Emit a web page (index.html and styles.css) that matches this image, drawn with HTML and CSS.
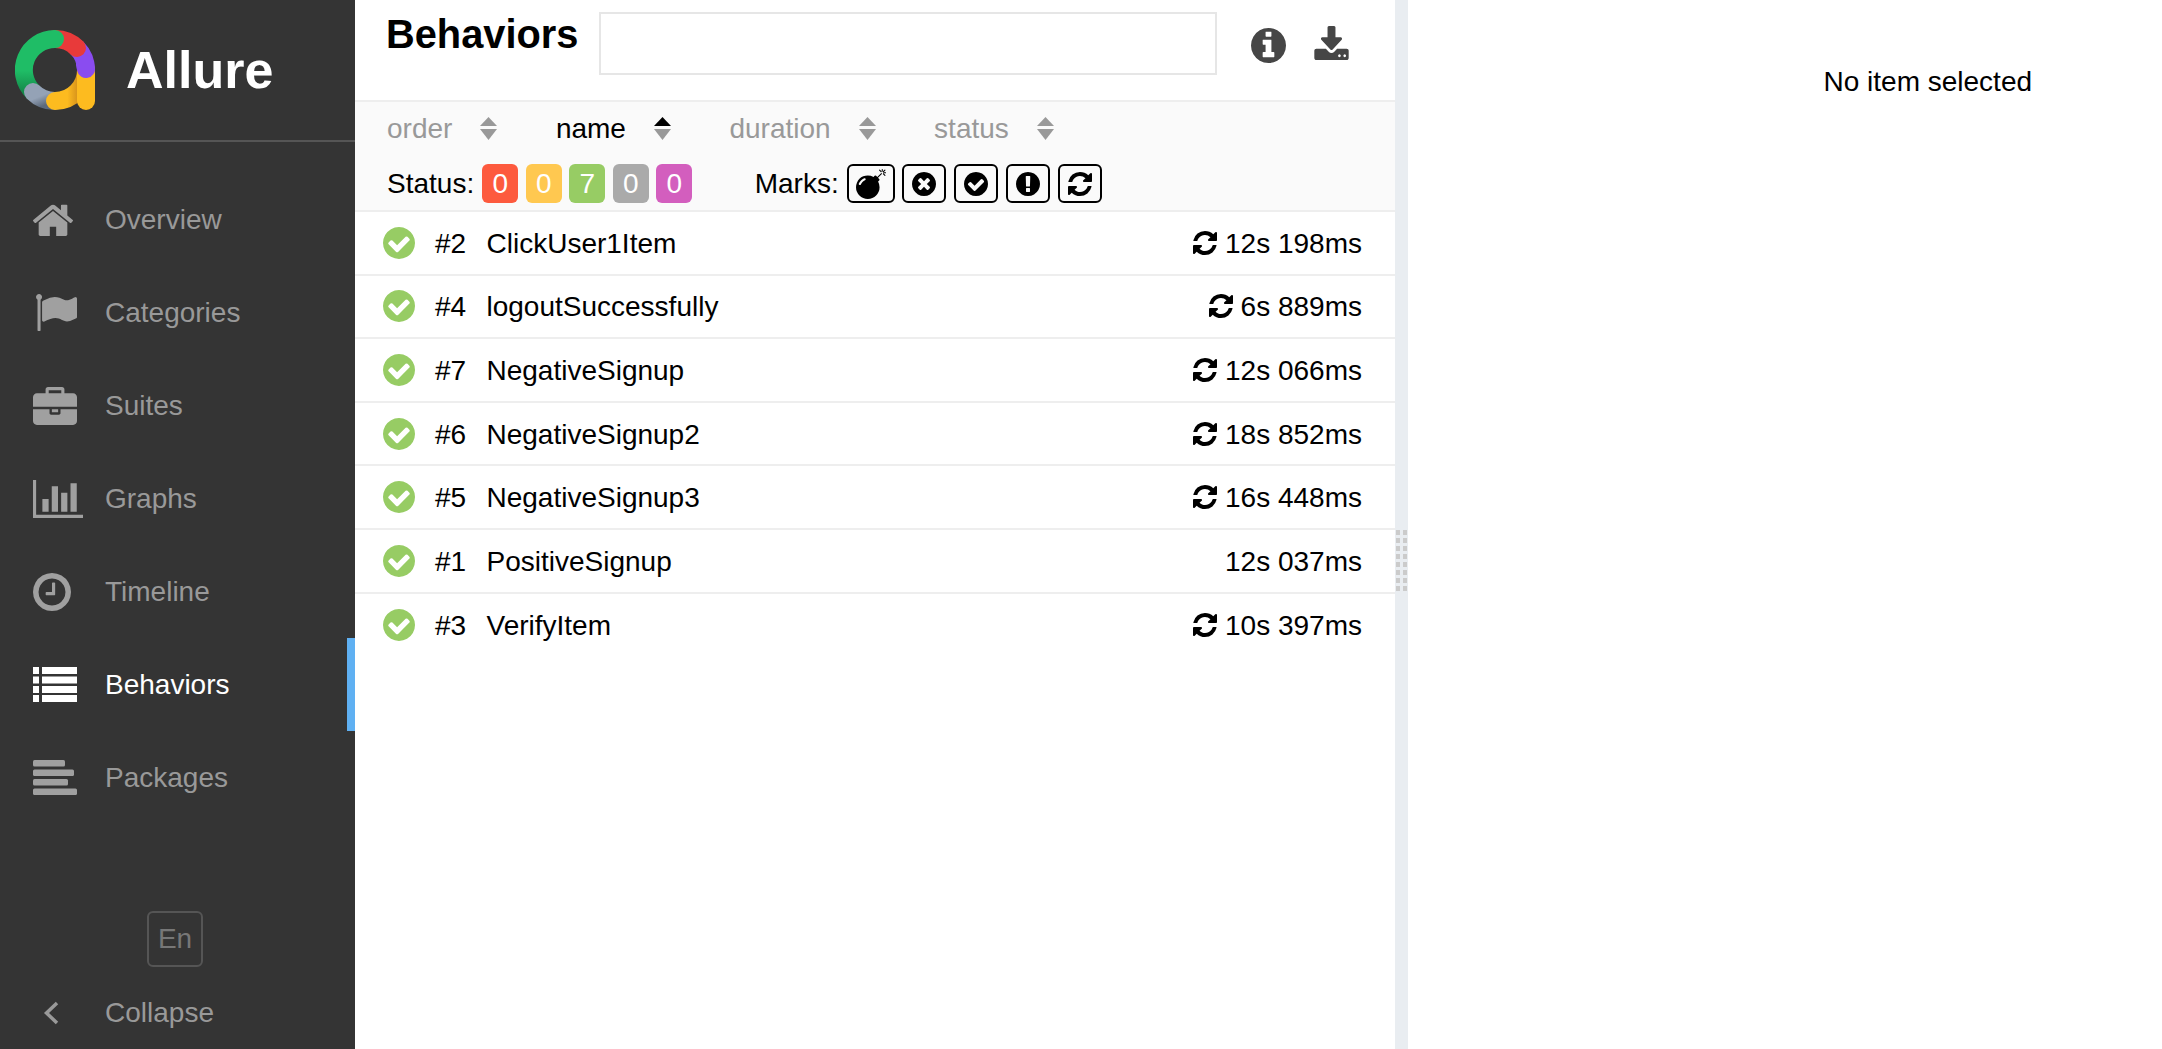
FILE: index.html
```html
<!DOCTYPE html>
<html lang="en">
<head>
    <meta charset="UTF-8">
    <meta name="viewport" content="width=device-width, initial-scale=1.0">
    <title>Allure Report</title>
    <link rel="stylesheet" href="styles.css">
</head>
<body>
    <!-- Side menu -->
    <aside class="side-nav">
        <div class="brand">
            <svg class="brand-logo" viewBox="15 30 80 80" width="80" height="80">
                <defs>
                    <linearGradient id="greenFade" x1="0" y1="0" x2="0" y2="1">
                        <stop offset="0.6" stop-color="#1fbd66"/>
                        <stop offset="1" stop-color="#14894a"/>
                    </linearGradient>
                    <linearGradient id="grayFade" x1="0" y1="0" x2="1" y2="1">
                        <stop offset="0.4" stop-color="#94a2b6"/>
                        <stop offset="1" stop-color="#5d6a7c"/>
                    </linearGradient>
                    <linearGradient id="yellowFade" x1="0" y1="0" x2="1" y2="0">
                        <stop offset="0.4" stop-color="#fdbb1f"/>
                        <stop offset="0.72" stop-color="#d8941c"/>
                    </linearGradient>
                </defs>
                <g fill="none" stroke-width="18" stroke-linecap="round">
                    <path stroke="#8a4cf0" d="M77 48A31 31 0 0 1 86 70"/>
                    <path stroke="#e83a3a" d="M55 39A31 31 0 0 1 77 48"/>
                    <path stroke="url(#greenFade)" d="M33 92A31 31 0 0 1 55 39"/>
                    <path stroke="url(#grayFade)" d="M33 92A31 31 0 0 0 55 101"/>
                    <path stroke="url(#yellowFade)" d="M55 101A31 31 0 0 0 86 70"/>
                    <path stroke="#fdbb1f" d="M86 74V101"/>
                    <path stroke="#8a4cf0" d="M85 64L86 69"/>
                </g>
            </svg>
            <span class="brand-name">Allure</span>
        </div>
        <ul class="menu">
            <li class="menu-item">
                <span class="menu-icon">
                    <svg viewBox="92 224 1608 1312" width="40" height="32" preserveAspectRatio="none"><path d="M1472 992v480q0 26-19 45t-45 19h-384v-384h-256v384h-384q-26 0-45-19t-19-45v-480q0-1 .5-3t.5-3l575-474 575 474q1 2 1 6zm223-69l-62 74q-8 9-21 11h-3q-13 0-21-7l-692-577-692 577q-12 8-24 7-13-2-21-11l-62-74q-8-10-7-23.500t11-21.500l719-599q32-26 76-26t76 26l244 204v-195q0-14 9-23t23-9h192q14 0 23 9t9 23v408l219 182q10 8 11 21.500t-7 23.500z"/></svg>
                </span>
                Overview
            </li>
            <li class="menu-item">
                <span class="menu-icon">
                    <svg class="icon-flag" viewBox="64 128 1728 1536" width="41" height="37" preserveAspectRatio="none"><path d="M320 256q0 72-64 110v1266q0 13-9.500 22.500t-22.500 9.500h-64q-13 0-22.500-9.500t-9.500-22.500v-1266q-64-38-64-110 0-53 37.500-90.500t90.500-37.500 90.500 37.500 37.500 90.500zm1472 64v763q0 25-12.500 38.500t-39.500 27.500q-215 116-369 116-61 0-123.500-22t-108.500-48-115.500-48-142.500-22q-192 0-464 146-17 9-33 9-26 0-45-19t-19-45v-742q0-32 31-55 21-14 79-43 236-120 421-120 107 0 200 29t219 88q38 19 88 19 54 0 117.500-21t110-47 88-47 54.500-21q26 0 45 19t19 45z"/></svg>
                </span>
                Categories
            </li>
            <li class="menu-item">
                <span class="menu-icon">
                    <svg viewBox="0 0 1792 1536" width="44" height="38" preserveAspectRatio="none"><path d="M640 256h512v-128h-512v128zm1152 640v480q0 66-47 113t-113 47h-1472q-66 0-113-47t-47-113v-480h672v160q0 26 19 45t45 19h320q26 0 45-19t19-45v-160h672zm-768 0v128h-256v-128h256zm768-480v384h-1792v-384q0-66 47-113t113-47h352v-160q0-40 28-68t68-28h576q40 0 68 28t28 68v160h352q66 0 113 47t47 113z"/></svg>
                </span>
                Suites
            </li>
            <li class="menu-item">
                <span class="menu-icon">
                    <svg viewBox="0 128 2048 1536" width="50" height="38" preserveAspectRatio="none"><path d="M640 896v512h-256v-512h256zm384-512v1024h-256v-1024h256zm1024 1152v128h-2048v-1536h128v1408h1920zm-640-896v768h-256v-768h256zm384-384v1152h-256v-1152h256z"/></svg>
                </span>
                Graphs
            </li>
            <li class="menu-item">
                <span class="menu-icon">
                    <svg viewBox="128 128 1536 1536" width="38" height="38"><path d="M1024 544v448q0 14-9 23t-23 9h-320q-14 0-23-9t-9-23v-64q0-14 9-23t23-9h224v-352q0-14 9-23t23-9h64q14 0 23 9t9 23zm416 352q0-148-73-273t-198-198-273-73-273 73-198 198-73 273 73 273 198 198 273 73 273-73 198-198 73-273zm224 0q0 209-103 385.500t-279.500 279.500-385.500 103-385.500-103-279.500-279.500-103-385.500 103-385.500 279.500-279.500 385.500-103 385.500 103 279.500 279.500 103 385.500z"/></svg>
                </span>
                Timeline
            </li>
            <li class="menu-item menu-item-active">
                <span class="menu-icon">
                    <svg viewBox="0 0 44 35" width="44" height="35">
                        <rect x="0" y="0" width="6" height="7"/><rect x="9" y="0" width="35" height="7"/>
                        <rect x="0" y="9.500" width="6" height="7"/><rect x="9" y="9.500" width="35" height="7"/>
                        <rect x="0" y="19" width="6" height="7"/><rect x="9" y="19" width="35" height="7"/>
                        <rect x="0" y="28" width="6" height="7"/><rect x="9" y="28" width="35" height="7"/>
                    </svg>
                </span>
                Behaviors
            </li>
            <li class="menu-item">
                <span class="menu-icon">
                    <svg viewBox="0 0 44 35" width="44" height="35">
                        <rect x="0" y="0" width="32" height="6.500" rx="1.500"/>
                        <rect x="0" y="9.500" width="41" height="6.500" rx="1.500"/>
                        <rect x="0" y="19" width="35" height="6.500" rx="1.500"/>
                        <rect x="0" y="28.500" width="44" height="6.500" rx="1.500"/>
                    </svg>
                </span>
                Packages
            </li>
        </ul>
        <div class="side-footer">
            <div class="lang-wrap"><span class="lang-btn">En</span></div>
            <div class="collapse-row">
                <span class="menu-icon">
                    <svg class="icon-chevron" viewBox="0 0 16 24" width="16" height="24"><path d="M14 2L3.500 12 14 22" fill="none" stroke="#999" stroke-width="3.500"/></svg>
                </span>
                Collapse
            </div>
        </div>
    </aside>

    <!-- Tree pane -->
    <main class="tree-pane">
        <header class="tree-head">
            <h1 class="tree-title">Behaviors</h1>
            <input class="tree-search" type="text">
            <svg class="icon-info" viewBox="128 128 1536 1536" width="35" height="35"><path d="M1152 1376v-160q0-14-9-23t-23-9h-96v-512q0-14-9-23t-23-9h-320q-14 0-23 9t-9 23v160q0 14 9 23t23 9h96v320h-96q-14 0-23 9t-9 23v160q0 14 9 23t23 9h448q14 0 23-9t9-23zm-128-896v-160q0-14-9-23t-23-9h-192q-14 0-23 9t-9 23v160q0 14 9 23t23 9h192q14 0 23-9t9-23zm640 416q0 209-103 385.500t-279.500 279.500-385.500 103-385.500-103-279.500-279.500-103-385.500 103-385.500 279.500-279.500 385.500-103 385.500 103 279.500 279.500 103 385.500z"/></svg>
            <svg class="icon-download" viewBox="0 0 1792 1536" width="37" height="34" preserveAspectRatio="none"><path d="M1344 1344q0-26-19-45t-45-19-45 19-19 45 19 45 45 19 45-19 19-45zm256 0q0-26-19-45t-45-19-45 19-19 45 19 45 45 19 45-19 19-45zm128-224v320q0 40-28 68t-68 28h-1472q-40 0-68-28t-28-68v-320q0-40 28-68t68-28h465l135 136q58 56 136 56t136-56l136-136h464q40 0 68 28t28 68zm-325-569q17 41-14 70l-448 448q-18 19-45 19t-45-19l-448-448q-31-29-14-70 17-39 59-39h256v-448q0-26 19-45t45-19h256q26 0 45 19t19 45v448h256q42 0 59 39z"/></svg>
        </header>

        <div class="filters">
            <div class="sort-row">
                <span class="sort-item">order
                    <svg class="sort-arrows" viewBox="0 0 17 23" width="17" height="23"><path d="M8.500 0L17 9H0z"/><path d="M0 12H17L8.500 23z"/></svg>
                </span>
                <span class="sort-item sort-item-active">name
                    <svg class="sort-arrows" viewBox="0 0 17 23" width="17" height="23"><path class="arrow-on" d="M8.500 0L17 9H0z"/><path d="M0 12H17L8.500 23z"/></svg>
                </span>
                <span class="sort-item">duration
                    <svg class="sort-arrows" viewBox="0 0 17 23" width="17" height="23"><path d="M8.500 0L17 9H0z"/><path d="M0 12H17L8.500 23z"/></svg>
                </span>
                <span class="sort-item">status
                    <svg class="sort-arrows" viewBox="0 0 17 23" width="17" height="23"><path d="M8.500 0L17 9H0z"/><path d="M0 12H17L8.500 23z"/></svg>
                </span>
            </div>
            <div class="filter-row">
                <span class="filter-label">Status:</span>
                <span class="badge badge-failed">0</span>
                <span class="badge badge-broken">0</span>
                <span class="badge badge-passed">7</span>
                <span class="badge badge-skipped">0</span>
                <span class="badge badge-unknown">0</span>
                <span class="filter-label marks-label">Marks:</span>
                <span class="mark mark-wide">
                    <svg viewBox="0 0 1792 1792" width="30" height="30"><path d="M571 589q-10-25-34-35t-49 0q-108 44-191 127t-127 191q-10 25 0 49t35 34q13 5 24 5 42 0 60-40 34-84 98.500-148.500t148.500-98.500q25-11 35-35t0-49zm942-356l46 46-244 243 68 68q19 19 19 45.500t-19 45.500l-64 64q89 161 89 343 0 143-55.500 273.500t-150 225-225 150-273.500 55.500-273.500-55.500-225-150-150-225-55.500-273.500 55.500-273.500 150-225 225-150 273.500-55.500q182 0 343 89l64-64q19-19 45.500-19t45.500 19l68 68zm8-56q-10 10-22 10-13 0-23-10l-91-90q-9-10-9-23t9-23q10-9 23-9t23 9l90 91q10 9 10 22.500t-10 22.500zm230 230q-11 9-23 9t-23-9l-90-91q-10-9-10-22.500t10-22.500q9-10 22.500-10t22.500 10l91 90q9 10 9 23t-9 23zm41-183q0 14-9 23t-23 9h-96q-14 0-23-9t-9-23 9-23 23-9h96q14 0 23 9t9 23zm-192-192v96q0 14-9 23t-23 9-23-9-9-23v-96q0-14 9-23t23-9 23 9 9 23zm151 55l-91 90q-10 10-22 10-13 0-23-10-10-9-10-22.500t10-22.500l90-91q10-9 23-9t23 9q9 10 9 23t-9 23z"/></svg>
                </span>
                <span class="mark">
                    <svg viewBox="128 128 1536 1536" width="24" height="24"><path d="M1277 1122q0-26-19-45l-181-181 181-181q19-19 19-45 0-27-19-46l-90-90q-19-19-46-19-26 0-45 19l-181 181-181-181q-19-19-45-19-27 0-46 19l-90 90q-19 19-19 46 0 26 19 45l181 181-181 181q-19 19-19 45 0 27 19 46l90 90q19 19 46 19 26 0 45-19l181-181 181 181q19 19 45 19 27 0 46-19l90-90q19-19 19-46zm387-226q0 209-103 385.500t-279.500 279.500-385.500 103-385.500-103-279.500-279.500-103-385.500 103-385.500 279.500-279.500 385.500-103 385.500 103 279.500 279.500 103 385.500z"/></svg>
                </span>
                <span class="mark">
                    <svg viewBox="128 128 1536 1536" width="24" height="24"><path d="M1412 734q0-28-18-46l-91-90q-19-19-45-19t-45 19l-408 407-226-226q-19-19-45-19t-45 19l-91 90q-18 18-18 46 0 27 18 45l362 362q19 19 45 19 27 0 46-19l543-543q18-18 18-45zm252 162q0 209-103 385.500t-279.500 279.500-385.500 103-385.500-103-279.500-279.500-103-385.500 103-385.500 279.500-279.500 385.500-103 385.500 103 279.500 279.500 103 385.500z"/></svg>
                </span>
                <span class="mark">
                    <svg viewBox="128 128 1536 1536" width="24" height="24"><path d="M896 128q209 0 385.500 103t279.500 279.500 103 385.500-103 385.500-279.500 279.500-385.500 103-385.500-103-279.500-279.500-103-385.500 103-385.500 279.500-279.500 385.500-103zm128 1247v-190q0-14-9-23.500t-22-9.500h-192q-13 0-23 10t-10 23v190q0 13 10 23t23 10h192q13 0 22-9.500t9-23.500zm-2-344l18-621q0-12-10-18-10-8-24-8h-220q-14 0-24 8-10 6-10 18l17 621q0 10 10 17.500t24 7.500h185q14 0 23.500-7.500t10.500-17.500z"/></svg>
                </span>
                <span class="mark">
                    <svg viewBox="128 128 1536 1536" width="24" height="24"><use href="#refreshPath"/></svg>
                </span>
            </div>
        </div>

        <ul class="tree-list">
            <li class="tree-row">
                <svg class="check" viewBox="128 128 1536 1536" width="32" height="32"><use href="#checkPath"/></svg>
                <span class="order">#2</span>
                <span class="test-name">ClickUser1Item</span>
                <svg class="retry" viewBox="128 128 1536 1536" width="24" height="24"><use href="#refreshPath"/></svg>
                <span class="time">12s 198ms</span>
            </li>
            <li class="tree-row">
                <svg class="check" viewBox="128 128 1536 1536" width="32" height="32"><use href="#checkPath"/></svg>
                <span class="order">#4</span>
                <span class="test-name">logoutSuccessfully</span>
                <svg class="retry" viewBox="128 128 1536 1536" width="24" height="24"><use href="#refreshPath"/></svg>
                <span class="time">6s 889ms</span>
            </li>
            <li class="tree-row">
                <svg class="check" viewBox="128 128 1536 1536" width="32" height="32"><use href="#checkPath"/></svg>
                <span class="order">#7</span>
                <span class="test-name">NegativeSignup</span>
                <svg class="retry" viewBox="128 128 1536 1536" width="24" height="24"><use href="#refreshPath"/></svg>
                <span class="time">12s 066ms</span>
            </li>
            <li class="tree-row">
                <svg class="check" viewBox="128 128 1536 1536" width="32" height="32"><use href="#checkPath"/></svg>
                <span class="order">#6</span>
                <span class="test-name">NegativeSignup2</span>
                <svg class="retry" viewBox="128 128 1536 1536" width="24" height="24"><use href="#refreshPath"/></svg>
                <span class="time">18s 852ms</span>
            </li>
            <li class="tree-row">
                <svg class="check" viewBox="128 128 1536 1536" width="32" height="32"><use href="#checkPath"/></svg>
                <span class="order">#5</span>
                <span class="test-name">NegativeSignup3</span>
                <svg class="retry" viewBox="128 128 1536 1536" width="24" height="24"><use href="#refreshPath"/></svg>
                <span class="time">16s 448ms</span>
            </li>
            <li class="tree-row">
                <svg class="check" viewBox="128 128 1536 1536" width="32" height="32"><use href="#checkPath"/></svg>
                <span class="order">#1</span>
                <span class="test-name">PositiveSignup</span>
                <span class="time">12s 037ms</span>
            </li>
            <li class="tree-row tree-row-last">
                <svg class="check" viewBox="128 128 1536 1536" width="32" height="32"><use href="#checkPath"/></svg>
                <span class="order">#3</span>
                <span class="test-name">VerifyItem</span>
                <svg class="retry" viewBox="128 128 1536 1536" width="24" height="24"><use href="#refreshPath"/></svg>
                <span class="time">10s 397ms</span>
            </li>
        </ul>
    </main>

    <div class="splitter"><div class="splitter-grip"></div></div>

    <section class="detail-pane">No item selected</section>

    <!-- Shared icon shapes -->
    <svg class="icon-defs" width="0" height="0">
        <defs>
            <path id="refreshPath" d="M1639 1056q0 5-1 7-64 268-268 434.500t-478 166.500q-146 0-282.500-55t-243.500-157l-129 129q-19 19-45 19t-45-19-19-45v-448q0-26 19-45t45-19h448q26 0 45 19t19 45-19 45l-137 137q71 66 161 102t187 36q134 0 250-65t186-179q11-17 53-117 8-23 30-23h192q13 0 22.500 9.500t9.500 22.500zm25-800v448q0 26-19 45t-45 19h-448q-26 0-45-19t-19-45 19-45l138-138q-148-137-349-137-134 0-250 65t-186 179q-11 17-53 117-8 23-30 23h-199q-13 0-22.500-9.500t-9.500-22.500v-7q65-268 270-434.500t480-166.500q146 0 284 55.500t245 156.500l130-129q19-19 45-19t45 19 19 45z"/>
            <path id="checkPath" d="M1412 734q0-28-18-46l-91-90q-19-19-45-19t-45 19l-408 407-226-226q-19-19-45-19t-45 19l-91 90q-18 18-18 46 0 27 18 45l362 362q19 19 45 19 27 0 46-19l543-543q18-18 18-45zm252 162q0 209-103 385.500t-279.500 279.500-385.500 103-385.500-103-279.500-279.500-103-385.500 103-385.500 279.500-279.500 385.500-103 385.500 103 279.500 279.500 103 385.500z"/>
        </defs>
    </svg>
</body>
</html>
```

FILE: styles.css
```css
html, body {
    height: 100%;
}
body {
    display: flex;
    margin: 0;
    overflow: hidden;
    font-family: "Liberation Sans", Arial, sans-serif;
    font-size: 28px;
    color: #000;
    background-color: #fff;
}
ul {
    list-style-type: none;
    margin: 0;
    padding: 0;
}

/* side menu */
.side-nav {
    display: flex;
    flex-direction: column;
    flex: none;
    width: 355px;
    height: 100%;
    color: #999;
    background-color: #343434;
}
.brand {
    display: flex;
    align-items: center;
    height: 140px;
    padding-left: 15px;
    border-bottom: 2px solid #555;
}
.brand-logo {
    flex: none;
}
.brand-name {
    margin-left: 31px;
    font-size: 52px;
    font-weight: bold;
    color: #fff;
}
.menu {
    margin-top: 31.4px;
}
.menu-item {
    display: flex;
    align-items: center;
    height: 93px;
    box-sizing: border-box;
}
.menu-item-active {
    color: #fff;
    border-right: 8px solid #5fb0f2;
}
.menu-icon {
    display: flex;
    flex: none;
    align-items: center;
    width: 72px;
    margin-left: 33px;
    fill: #a0a0a0;
}
.menu-item-active .menu-icon {
    fill: #fff;
}
.icon-flag {
    margin-left: 3px;
}
.icon-chevron {
    margin-left: 10px;
}
.side-footer {
    margin-top: auto;
    padding-bottom: 4px;
}
.lang-wrap {
    padding-left: 147px;
}
.lang-btn {
    display: flex;
    align-items: center;
    justify-content: center;
    width: 52px;
    height: 52px;
    border: 2px solid #555;
    border-radius: 6px;
    color: #777;
}
.collapse-row {
    display: flex;
    align-items: center;
    height: 64px;
    margin-top: 14px;
}

/* tree pane */
.tree-pane {
    flex: none;
    width: 1040px;
    height: 100%;
}
.tree-head {
    display: flex;
    align-items: flex-start;
    height: 100px;
    box-sizing: content-box;
    padding-left: 32px;
    border-bottom: 2px solid #eee;
}
.tree-title {
    margin: 11px 20.5px 0 -1px;
    font-size: 39.8px;
    line-height: 46px;
    font-weight: bold;
}
.tree-search {
    flex: none;
    width: 618px;
    height: 63px;
    box-sizing: border-box;
    margin: 12px 0 0;
    padding: 0 10px;
    border: 2px solid #e6e6e6;
    outline: none;
}
.icon-info {
    flex: none;
    margin: 28px 0 0 34px;
    fill: #464646;
}
.icon-download {
    flex: none;
    margin: 26px 0 0 27px;
    fill: #464646;
}
.filters {
    height: 108px;
    padding-left: 32px;
    background-color: #fafafa;
    border-bottom: 2px solid #eee;
}
.sort-row {
    display: flex;
    align-items: center;
    height: 53px;
}
.sort-item {
    display: flex;
    align-items: center;
    margin-right: 58.5px;
    color: #999;
    fill: #999;
}
.sort-item-active {
    color: #000;
}
.sort-arrows {
    margin-left: 28px;
}
.arrow-on {
    fill: #000;
}
.filter-row {
    display: flex;
    align-items: center;
    height: 39px;
    margin-top: 9px;
}
.filter-label {
    margin-right: 8px;
}
.marks-label {
    margin-left: 55px;
}
.badge {
    width: 36px;
    height: 39px;
    margin-right: 7.5px;
    border-radius: 6px;
    line-height: 39px;
    text-align: center;
    color: #fff;
}
.badge-failed {
    background-color: #fd5a3e;
}
.badge-broken {
    background-color: #ffc850;
}
.badge-passed {
    background-color: #97cc64;
}
.badge-skipped {
    background-color: #aaa;
}
.badge-unknown {
    background-color: #d35ebe;
}
.mark {
    display: flex;
    align-items: center;
    justify-content: center;
    width: 40px;
    height: 35px;
    margin-right: 8px;
    border: 2px solid #000;
    border-radius: 6px;
}
.mark-wide {
    width: 44px;
    margin-right: 7px;
}
.tree-row {
    display: flex;
    align-items: center;
    height: 63.6px;
    box-sizing: border-box;
    padding: 0 33px 0 28px;
    border-bottom: 2px solid #eee;
}
.tree-row-last {
    border-bottom: none;
}
.check {
    flex: none;
    fill: #97cc64;
}
.order {
    width: 51.5px;
    margin: 2px 0 0 20px;
}
.test-name {
    flex: 1;
    margin-top: 2px;
}
.time {
    margin-top: 2px;
}
.retry {
    flex: none;
    margin-right: 8px;
}

/* splitter and detail */
.splitter {
    flex: none;
    width: 13px;
    height: 100%;
    box-sizing: border-box;
    padding: 530px 0 0 1px;
    background-color: #e9edf1;
}
.splitter-grip {
    width: 11px;
    height: 61px;
    background-image: linear-gradient(to bottom, transparent 5px, #e9edf1 5px), linear-gradient(to right, #cbcbcb 4px, transparent 4px);
    background-size: 100% 8px, 7px 100%;
}
.detail-pane {
    flex: 1;
    padding: 66px 0 0 415.5px;
    line-height: 32px;
}
.icon-defs {
    position: absolute;
}
```
